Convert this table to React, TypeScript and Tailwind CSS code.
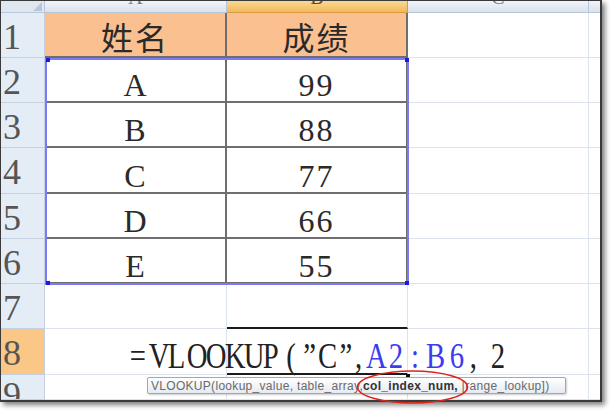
import React from "react";

type Row = { n: string; a?: string; b?: string };

const rows: Row[] = [
  { n: "1", a: "姓名", b: "成绩" },
  { n: "2", a: "A", b: "99" },
  { n: "3", a: "B", b: "88" },
  { n: "4", a: "C", b: "77" },
  { n: "5", a: "D", b: "66" },
  { n: "6", a: "E", b: "55" },
  { n: "7" },
  { n: "8" },
  { n: "9" },
];

// each glyph of the formula with the width it takes in the cell
const formula: { c: string; w: string; blue?: boolean; left?: boolean }[] = [
  { c: "=", w: "w-[19px]" },
  { c: "V", w: "w-[19px]" },
  { c: "L", w: "w-[19px]" },
  { c: "O", w: "w-[19px]" },
  { c: "O", w: "w-[19px]" },
  { c: "K", w: "w-[19px]" },
  { c: "U", w: "w-[19px]" },
  { c: "P", w: "w-[19px]" },
  { c: "(", w: "w-[22px]" },
  { c: "”", w: "w-[14px]" },
  { c: "C", w: "w-[22px]" },
  { c: "”", w: "w-[16px]" },
  { c: ",", w: "w-[10px]", left: true },
  { c: "A", w: "w-[22px]", blue: true },
  { c: "2", w: "w-[20px]", blue: true },
  { c: ":", w: "w-[18px]", blue: true },
  { c: "B", w: "w-[22px]", blue: true },
  { c: "6", w: "w-[22px]", blue: true },
  { c: ",", w: "w-[20px]", left: true },
  { c: "2", w: "w-[20px]" },
];

const FormulaText = () => (
  <div className="pl-[83px] pt-[10px] whitespace-nowrap leading-[36px] text-[35px] font-['Liberation_Serif',serif] text-[#222]">
    {formula.map((g, i) => (
      <span
        key={i}
        className={`inline-block ${g.w} ${g.left ? "text-left" : "text-center"} scale-x-[0.82] ${
          g.blue ? "text-[#3b3bef]" : ""
        }`}
      >
        {g.c}
      </span>
    ))}
  </div>
);

const App = () => {
  return (
    <div className="relative w-[611px] h-[411px] bg-white overflow-hidden">
      <div className="relative w-[602px] h-[402px] bg-white border border-r-2 border-b-2 border-[#3a3a3a] shadow-[3px_3px_5px_rgba(0,0,0,0.5)] overflow-hidden">
        <div className="grid grid-cols-[44px_182px_181px_181px_1fr] grid-rows-[12px_45px_45px_45px_46px_45px_45px_45px_46px_1fr] h-full">
          {/* column headings, letters cut by the top of the shot */}
          <div className="relative bg-[#dfe7f1] border-r border-b border-[#b7c6d8]">
            <svg className="absolute right-[2px] bottom-[1px]" width="9" height="9" viewBox="0 0 9 9">
              <path d="M9 0 L9 9 L0 9 Z" fill="#b9c7d8" />
            </svg>
          </div>
          <div className="flex justify-center overflow-hidden bg-gradient-to-b from-[#f1f4f9] to-[#dae2ed] border-r border-b border-[#b7c6d8]">
            <span className="-mt-[14px] leading-[20px] text-[20px] text-[#6d7a8c] font-['Liberation_Serif',serif]">A</span>
          </div>
          <div className="flex justify-center overflow-hidden bg-gradient-to-b from-[#f9d996] to-[#f2b955] border-r border-b border-[#d79b45]">
            <span className="-mt-[14px] leading-[20px] text-[20px] text-[#5b4a2c] font-['Liberation_Serif',serif]">B</span>
          </div>
          <div className="flex justify-center overflow-hidden bg-gradient-to-b from-[#f1f4f9] to-[#dae2ed] border-r border-b border-[#b7c6d8]">
            <span className="-mt-[14px] leading-[20px] text-[20px] text-[#6d7a8c] font-['Liberation_Serif',serif]">C</span>
          </div>
          <div className="bg-gradient-to-b from-[#f1f4f9] to-[#dae2ed] border-b border-[#b7c6d8]" />

          {rows.map((r) => {
            const num = Number(r.n);
            const inTable = num <= 6;
            const head = num === 1;
            return (
              <React.Fragment key={r.n}>
                <div
                  className={`flex pl-[2px] overflow-hidden border-r border-b border-[#c5d1e0] ${
                    num === 8 ? "bg-[#fac786]" : "bg-[#e4ecf6]"
                  } ${num === 9 ? "items-start pt-[2px]" : "items-center pt-[3px]"}`}
                >
                  <span className="leading-none text-[36px] text-[#555] font-['Liberation_Serif',serif]">{r.n}</span>
                </div>
                {inTable ? (
                  <>
                    <div
                      className={`flex justify-center items-center border-r-2 border-b-2 border-[#6e6e6e] ${
                        head ? "bg-[#fac08f] pt-[2px]" : "pt-[11px]"
                      }`}
                    >
                      <span
                        className={`leading-none text-[#2a2a2a] ${
                          head
                            ? "text-[32px] font-['Noto_Sans_CJK_SC',sans-serif] tracking-[2px]"
                            : "text-[32px] font-['Liberation_Serif',serif]"
                        }`}
                      >
                        {r.a}
                      </span>
                    </div>
                    <div
                      className={`flex justify-center items-center border-r-2 border-b-2 border-[#6e6e6e] ${
                        head ? "bg-[#fac08f] pt-[2px]" : "pt-[11px]"
                      }`}
                    >
                      <span
                        className={`leading-none text-[#2a2a2a] ${
                          head
                            ? "text-[32px] font-['Noto_Sans_CJK_SC',sans-serif] tracking-[2px]"
                            : "text-[32px] tracking-[2px] font-['Liberation_Serif',serif]"
                        }`}
                      >
                        {r.b}
                      </span>
                    </div>
                  </>
                ) : (
                  <>
                    <div className="border-r border-b border-[#dde3ec]">{num === 8 && <FormulaText />}</div>
                    <div
                      className={`border-r border-[#dde3ec] ${
                        num === 7 || num === 8 ? "border-b-2 border-b-[#1a1a1a]" : "border-b"
                      }`}
                    />
                  </>
                )}
                <div className="border-r border-b border-[#dde3ec]" />
                <div className="border-b border-[#dde3ec]" />
              </React.Fragment>
            );
          })}
        </div>

        {/* selection A2:B6 */}
        <div className="absolute left-[44px] top-[57px] w-[364px] h-[227px] border-2 border-[#7b7bf3]">
          <div className="absolute -left-[1px] -top-[2px] w-[4px] h-[4px] bg-[#1a1ae8]" />
          <div className="absolute -right-[2px] -top-[2px] w-[4px] h-[4px] bg-[#1a1ae8]" />
          <div className="absolute -left-[1px] -bottom-[2px] w-[4px] h-[4px] bg-[#1a1ae8]" />
          <div className="absolute -right-[2px] -bottom-[2px] w-[4px] h-[4px] bg-[#1a1ae8]" />
        </div>
        <div className="absolute left-[405px] top-[373px] w-[4px] h-[4px] bg-[#111]" />

        {/* function tooltip */}
        <div className="absolute left-[146px] top-[376px] w-[419px] h-[17px] flex items-center pl-[3px] rounded-[2px] border border-[#9ea8b6] bg-gradient-to-b from-[#ffffff] to-[#e6ebf2] shadow-[1px_1px_2px_rgba(0,0,0,0.2)] whitespace-nowrap text-[12px] tracking-[0.3px] leading-none text-[#6a6a6a] font-['Liberation_Sans',sans-serif]">
          VLOOKUP(lookup_value, table_array, <b className="text-[#333] font-bold">col_index_num,</b>&nbsp;[range_lookup])
        </div>
      </div>

      {/* red ellipse */}
      <svg className="absolute left-[355px] top-[369px]" width="115" height="36" viewBox="0 0 115 36">
        <ellipse cx="57.5" cy="18" rx="55" ry="16" fill="none" stroke="#e0241c" strokeWidth="1.6" />
      </svg>
    </div>
  );
};

export default App;
